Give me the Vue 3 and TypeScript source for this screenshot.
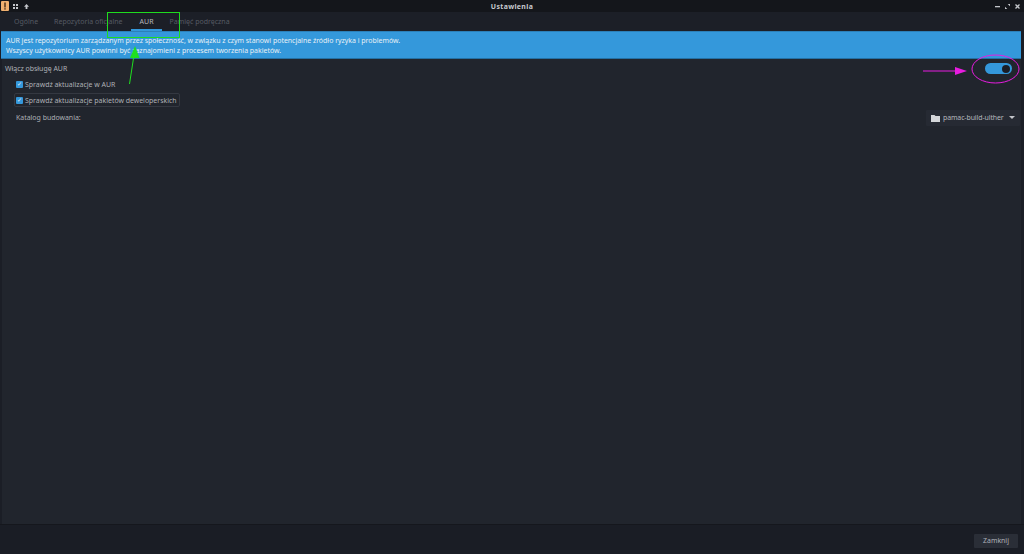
<script setup lang="ts">
const tabs: { label: string; active?: boolean }[] = [
  { label: 'Ogólne' },
  { label: 'Repozytoria oficjalne' },
  { label: 'AUR', active: true },
  { label: 'Pamięć podręczna' },
]
</script>

<template>
  <div class="window">
    <header class="titlebar">
      <div class="tb-left">
        <svg class="appicon" width="8" height="10" viewBox="0 0 8 10">
          <rect width="8" height="10" rx="1" fill="#f0b070" />
          <rect x="3.2" y="1.5" width="1.6" height="5" fill="#5a3a20" />
          <rect x="3.2" y="7.2" width="1.6" height="1.4" fill="#5a3a20" />
        </svg>
        <svg width="5" height="5" viewBox="0 0 5 5" fill="#c4c6cb">
          <rect x="0" y="0" width="2" height="2" />
          <rect x="3" y="0" width="2" height="2" />
          <rect x="0" y="3" width="2" height="2" />
          <rect x="3" y="3" width="2" height="2" />
        </svg>
        <svg width="5" height="5" viewBox="0 0 5 5" fill="#c4c6cb">
          <path d="M2.5 0 L5 2.7 H3.4 V5 H1.6 V2.7 H0 Z" />
        </svg>
      </div>
      <div class="title">Ustawienia</div>
      <div class="tb-right">
        <svg width="5" height="5" viewBox="0 0 5 5" fill="#c4c6cb"><rect x="0" y="2" width="5" height="1.3" /></svg>
        <svg width="5" height="5" viewBox="0 0 5 5" fill="#c4c6cb"><path d="M2.7 0H5V2.3ZM0 2.7 2.3 5H0Z" /></svg>
        <svg width="5" height="5" viewBox="0 0 5 5" stroke="#c4c6cb" stroke-width="1.3"><path d="M0.5 0.5 4.5 4.5M4.5 0.5 0.5 4.5" /></svg>
      </div>
    </header>

    <nav class="tabs">
      <div v-for="t in tabs" :key="t.label" class="tab" :class="{ active: t.active }">{{ t.label }}</div>
    </nav>

    <main class="panel">
      <div class="banner">
        <div>AUR jest repozytorium zarządzanym przez społeczność, w związku z czym stanowi potencjalne źródło ryzyka i problemów.</div>
        <div>Wszyscy użytkownicy AUR powinni być zaznajomieni z procesem tworzenia pakietów.</div>
      </div>
      <div class="settings">
        <div class="row-main">
          <span>Włącz obsługę AUR</span>
          <span class="switch"><span class="knob"></span></span>
        </div>
        <label class="check first"><span class="box">✓</span>Sprawdź aktualizacje w AUR</label>
        <label class="check focused"><span class="box">✓</span>Sprawdź aktualizacje pakietów deweloperskich</label>
        <div class="row-dir">
          <span>Katalog budowania:</span>
          <span class="picker">
            <svg width="9" height="8" viewBox="0 0 9 8" fill="#d4d6da"><path d="M0 1H3.5L4.5 2H9V8H0Z" /></svg>
            <span class="picker-label">pamac-build-ulther</span>
            <span class="caret"></span>
          </span>
        </div>
      </div>
    </main>

    <footer class="footer">
      <button class="close" type="button">Zamknij</button>
    </footer>

    <svg class="marks" width="1024" height="554" viewBox="0 0 1024 554">
      <rect x="107.5" y="12.5" width="72" height="25" fill="none" stroke="#1fdc1f" stroke-width="1" />
      <line x1="129.5" y1="84" x2="134" y2="55" stroke="#1fe01f" stroke-width="1" />
      <path d="M135 46 L130 58 L139.5 58 Z" fill="#1fe01f" />
      <line x1="923" y1="71" x2="960" y2="71" stroke="#e81ce0" stroke-width="1" />
      <path d="M967 71 L955 67 L955 75 Z" fill="#e81ce0" />
      <ellipse cx="995.5" cy="69" rx="23.5" ry="14" fill="none" stroke="#e81ce0" stroke-width="1" />
    </svg>
  </div>
</template>

<style>
html, body { margin: 0; background: #1a1d25; }
</style>

<style scoped>
.window {
  position: relative;
  width: 1024px;
  height: 554px;
  display: flex;
  flex-direction: column;
  overflow: hidden;
  background: #1b1e26;
  color: #aeb1b6;
  font: 6.95px "Noto Sans", sans-serif;
}
.titlebar {
  height: 12px;
  flex: none;
  display: grid;
  grid-template-columns: 1fr auto 1fr;
  align-items: center;
  background: #14161b;
  padding: 0 4px;
}
.tb-left { display: flex; align-items: center; gap: 6px; margin-left: -3px; }
.appicon { margin-right: -2px; }
.tb-right { display: flex; justify-content: flex-end; align-items: center; gap: 5px; }
.title { color: #c9cbd0; font-weight: 700; letter-spacing: 0.35px; }
.tabs {
  height: 19px;
  flex: none;
  display: flex;
  padding-left: 6px;
  background: #1c1f27;
}
.tab {
  padding: 0 8px;
  font-size: 7px;
  line-height: 20px;
  color: #565a63;
  white-space: nowrap;
}
.tab.active {
  padding-left: 9px;
  color: #b4b7bc;
  box-shadow: inset 0 -2px 0 #3498db;
}
.panel {
  flex: none;
  height: 493px;
  margin: 0 3px 0 2px;
  display: flex;
  flex-direction: column;
  background: #21252d;
}
.banner {
  margin-left: -1px;
  height: 28px;
  box-sizing: border-box;
  padding: 4px 5px;
  line-height: 10px;
  background: #3498db;
  border-top: 1px solid #2c80b9;
  border-bottom: 1px solid #2470a4;
  color: #e8f0f6;
}
.settings { padding: 0 3px; }
.row-main {
  height: 19px;
  display: flex;
  align-items: center;
  justify-content: space-between;
}
.switch {
  width: 27px;
  height: 11px;
  margin-right: 6px;
  border-radius: 6px;
  background: #3498db;
  display: flex;
  align-items: center;
  justify-content: flex-end;
  padding-right: 2px;
  box-sizing: border-box;
}
.knob { width: 8px; height: 8px; border-radius: 50%; background: #1b1e26; }
.check {
  display: flex;
  align-items: center;
  width: max-content;
  height: 14px;
  margin-left: 9px;
  padding: 0 2px 0 1px;
  border: 1px solid transparent;
  border-radius: 2px;
  box-sizing: border-box;
}
.check.first { margin-top: -1px; }
.check.focused { border-color: #343841; margin-top: 2px; }
.box {
  width: 7px;
  height: 7px;
  margin-right: 2px;
  border-radius: 1px;
  background: #3498db;
  color: #e8f0f6;
  font-size: 6px;
  line-height: 7px;
  text-align: center;
}
.row-dir {
  margin-top: 2px;
  height: 17px;
  padding-left: 11px;
  display: flex;
  align-items: center;
  justify-content: space-between;
}
.picker {
  width: 94px;
  height: 16px;
  margin-right: -2px;
  box-sizing: border-box;
  display: flex;
  align-items: center;
  gap: 3px;
  padding-left: 5px;
  background: #262a33;
  border-radius: 1px;
  white-space: nowrap;
}
.picker-label { color: #b4b7bc; letter-spacing: -0.1px; }
.caret {
  margin-left: 2px;
  border: 3px solid transparent;
  border-top: 3px solid #c4c6cb;
  border-bottom: 0;
}
.footer {
  flex: 1;
  display: flex;
  justify-content: flex-end;
  align-items: center;
  padding: 2px 6px 0 0;
  background: #1a1d25;
  border-top: 1px solid #15171d;
}
.close {
  width: 44px;
  height: 14px;
  padding: 0;
  border: 0;
  border-radius: 1px;
  background: #2a2e37;
  color: #aeb1b7;
  font: 6.95px "Noto Sans", sans-serif;
}
.marks {
  position: absolute;
  left: 0;
  top: 0;
  pointer-events: none;
}
</style>
